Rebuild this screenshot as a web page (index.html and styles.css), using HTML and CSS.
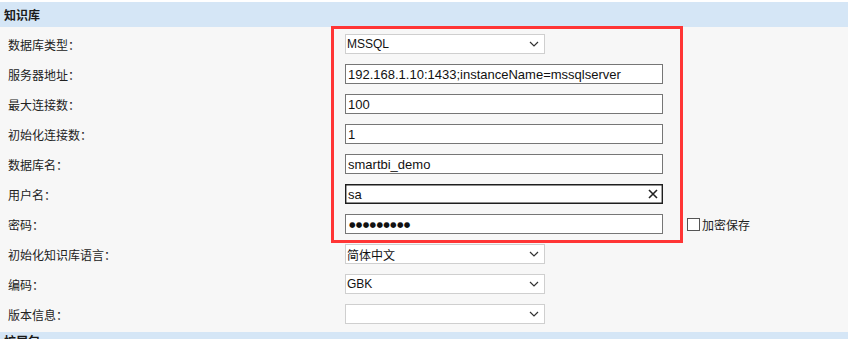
FILE: index.html
```html
<!DOCTYPE html>
<html lang="zh-CN">
<head>
<meta charset="utf-8">
<title>知识库</title>
<link rel="stylesheet" href="styles.css">
</head>
<body>
<div class="page">
  <div class="section-head">知识库</div>
  <div class="form">
    <div class="row">
      <span class="label">数据库类型：</span>
      <div class="select"><span>MSSQL</span><svg class="chev" width="10" height="6" viewBox="0 0 10 6"><path d="M1 1 L5 5 L9 1" fill="none" stroke="#333" stroke-width="1.2"/></svg></div>
    </div>
    <div class="row">
      <span class="label">服务器地址：</span>
      <div class="input">192.168.1.10:1433;instanceName=mssqlserver</div>
    </div>
    <div class="row">
      <span class="label">最大连接数：</span>
      <div class="input">100</div>
    </div>
    <div class="row">
      <span class="label">初始化连接数：</span>
      <div class="input">1</div>
    </div>
    <div class="row">
      <span class="label">数据库名：</span>
      <div class="input">smartbi_demo</div>
    </div>
    <div class="row">
      <span class="label">用户名：</span>
      <div class="input focused"><span>sa</span><svg class="clear" width="10" height="10" viewBox="0 0 10 10"><path d="M1 1 L9 9 M9 1 L1 9" stroke="#222" stroke-width="1.6"/></svg></div>
    </div>
    <div class="row">
      <span class="label">密码：</span>
      <div class="input pwd">●●●●●●●●●</div>
      <label class="check"><span class="box"></span>加密保存</label>
    </div>
    <div class="row">
      <span class="label">初始化知识库语言：</span>
      <div class="select"><span class="cjk">简体中文</span><svg class="chev" width="10" height="6" viewBox="0 0 10 6"><path d="M1 1 L5 5 L9 1" fill="none" stroke="#333" stroke-width="1.2"/></svg></div>
    </div>
    <div class="row">
      <span class="label">编码：</span>
      <div class="select"><span>GBK</span><svg class="chev" width="10" height="6" viewBox="0 0 10 6"><path d="M1 1 L5 5 L9 1" fill="none" stroke="#333" stroke-width="1.2"/></svg></div>
    </div>
    <div class="row">
      <span class="label">版本信息：</span>
      <div class="select"><span></span><svg class="chev" width="10" height="6" viewBox="0 0 10 6"><path d="M1 1 L5 5 L9 1" fill="none" stroke="#333" stroke-width="1.2"/></svg></div>
    </div>
  </div>
  <div class="section-head next">扩展包</div>
  <div class="highlight"></div>
</div>
</body>
</html>
```
FILE: styles.css
```css
html, body {
  margin: 0;
  padding: 0;
  background: #ffffff;
}
.page {
  position: relative;
  margin-top: 2px;
  background: #f7f7f7;
  font-family: "Noto Sans CJK SC", "Liberation Sans", sans-serif;
  font-size: 12px;
  color: #222;
  height: 337px;
  overflow: hidden;
}
.section-head {
  height: 25px;
  line-height: 25px;
  background: #d5e6f6;
  padding-left: 4px;
  font-weight: bold;
  font-size: 12px;
  color: #1a1a1a;
}
.section-head.next {
  line-height: 18px;
}
.form {
  padding: 2px 0 3px 0;
}
.row {
  height: 30px;
  display: grid;
  grid-template-columns: 337px 318px auto;
  align-items: center;
  padding-left: 8px;
}
.label {
  font-size: 12px;
  color: #222;
}
.input, .select {
  box-sizing: border-box;
  height: 20px;
  background: #fff;
  display: flex;
  align-items: center;
  font-family: "Liberation Sans", Arial, sans-serif;
  color: #111;
}
.input {
  width: 318px;
  border: 1px solid #767676;
  padding-left: 2px;
  font-size: 13px;
  justify-content: space-between;
}
.input.focused {
  border: 1px solid #1e1e1e;
  box-shadow: inset 0 0 0 0.4px #1e1e1e;
  padding-right: 4px;
}
.input.pwd {
  font-family: "DejaVu Sans", sans-serif;
  font-size: 7.5px;
  letter-spacing: 0.3px;
  padding-left: 3px;
  justify-content: flex-start;
}
.select {
  width: 200px;
  border: 1px solid #cfcfcf;
  padding-left: 1px;
  padding-right: 5px;
  font-size: 12px;
  justify-content: space-between;
}
.select .cjk {
  font-family: "Noto Sans CJK SC", sans-serif;
}
.chev {
  display: block;
}
.clear {
  display: block;
}
.check {
  display: flex;
  align-items: center;
  margin-left: 24px;
  font-size: 12px;
  color: #222;
}
.check .box {
  box-sizing: border-box;
  width: 13px;
  height: 13px;
  border: 1px solid #555;
  background: #fff;
  margin-right: 2px;
}
.highlight {
  position: absolute;
  left: 331px;
  top: 24px;
  width: 352px;
  height: 217px;
  box-sizing: border-box;
  border: 3px solid #ff3535;
  pointer-events: none;
}
```
